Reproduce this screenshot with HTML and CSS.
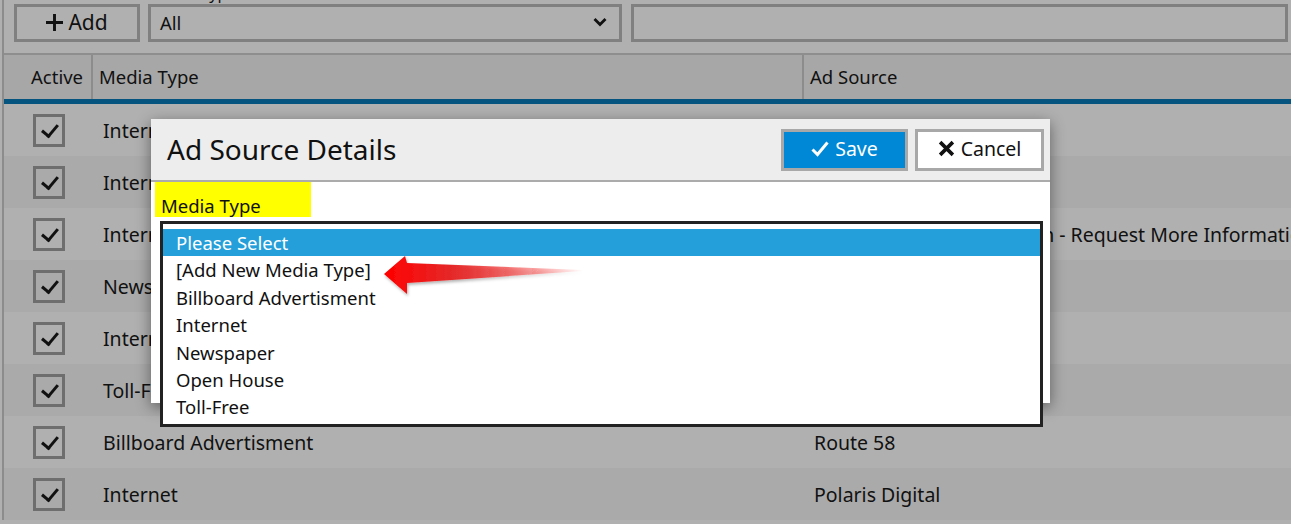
FILE: index.html
```html
<!DOCTYPE html>
<html lang="en">
	<head>
		<meta charset="utf-8"/>
		<title>Ad Sources</title>
		<link rel="stylesheet" href="styles.css">
	</head>
	<body>
		<div class="page">
			<div class="toolbar">
				<div class="field">
					<span class="field-label">&nbsp;</span>
					<button class="btn-add"><svg class="ico-plus" viewBox="0 0 14 14"><path d="M7 0V14M0 7H14"/></svg>Add</button>
				</div>
				<div class="field field-type">
					<span class="field-label">Media Type</span>
					<div class="select">All<svg class="ico-chevron" viewBox="0 0 14 10"><path d="M1.5 2L7 7.5L12.5 2"/></svg></div>
				</div>
				<div class="field field-grow">
					<span class="field-label">Ad Source</span>
					<div class="input"></div>
				</div>
			</div>
			<div class="grid">
				<div class="grid-head">
					<div class="col-active">Active</div>
					<div class="col-type">Media Type</div>
					<div class="col-source">Ad Source</div>
				</div>
				<div class="grid-row">
					<div class="col-active"><span class="checkbox"></span></div>
					<div class="col-type">Internet</div>
					<div class="col-source">Zillow</div>
				</div>
				<div class="grid-row">
					<div class="col-active"><span class="checkbox"></span></div>
					<div class="col-type">Internet</div>
					<div class="col-source">Realtor.com</div>
				</div>
				<div class="grid-row">
					<div class="col-active"><span class="checkbox"></span></div>
					<div class="col-type">Internet</div>
					<div class="col-source">Internet Lead Registration - Request More Information</div>
				</div>
				<div class="grid-row">
					<div class="col-active"><span class="checkbox"></span></div>
					<div class="col-type">Newspaper</div>
					<div class="col-source">Daily Press</div>
				</div>
				<div class="grid-row">
					<div class="col-active"><span class="checkbox"></span></div>
					<div class="col-type">Internet</div>
					<div class="col-source">Trulia</div>
				</div>
				<div class="grid-row">
					<div class="col-active"><span class="checkbox"></span></div>
					<div class="col-type">Toll-Free</div>
					<div class="col-source">800 Number</div>
				</div>
				<div class="grid-row">
					<div class="col-active"><span class="checkbox"></span></div>
					<div class="col-type">Billboard Advertisment</div>
					<div class="col-source">Route 58</div>
				</div>
				<div class="grid-row">
					<div class="col-active"><span class="checkbox"></span></div>
					<div class="col-type">Internet</div>
					<div class="col-source">Polaris Digital</div>
				</div>
			</div>
		</div>

		<div class="modal">
			<div class="modal-head">
				<h2>Ad Source Details</h2>
				<button class="btn-save"><svg class="ico-check" viewBox="0 0 18 16"><path d="M1.5 8.5L6.5 13.5L16.5 1.5"/></svg>Save</button>
				<button class="btn-cancel"><svg class="ico-x" viewBox="0 0 16 16"><path d="M2 2L14 14M14 2L2 14"/></svg>Cancel</button>
			</div>
			<div class="modal-body">
				<span class="label-hl">Media Type</span>
			</div>
		</div>

		<div class="listbox">
			<div class="option selected">Please Select</div>
			<div class="option">[Add New Media Type]</div>
			<div class="option">Billboard Advertisment</div>
			<div class="option">Internet</div>
			<div class="option">Newspaper</div>
			<div class="option">Open House</div>
			<div class="option">Toll-Free</div>
			<svg class="arrow" viewBox="0 0 215 50" width="215" height="50">
				<defs>
					<linearGradient id="arrowFill" x1="0" y1="0" x2="1" y2="0">
						<stop offset="0" stop-color="#ff0000"/>
						<stop offset="0.35" stop-color="#e42a2a"/>
						<stop offset="1" stop-color="#ff0000" stop-opacity="0"/>
					</linearGradient>
					<filter id="arrowShadow" x="-10%" y="-30%" width="120%" height="160%">
						<feDropShadow dx="1" dy="2" stdDeviation="1.5" flood-color="#000" flood-opacity="0.3"/>
					</filter>
				</defs>
				<path d="M6 24L27 6L29 13L205 20L205 21L29 33L29 44Z" fill="url(#arrowFill)" filter="url(#arrowShadow)"/>
			</svg>
		</div>
	</body>
</html>
```

FILE: styles.css
```css
html, body {
	margin: 0;
	height: 100%;
	overflow: hidden;
}
body {
	background-color: #b0b0b0;
	font-family: "Noto Sans", "Open Sans", sans-serif;
	color: #111;
	position: relative;
}
.page {
	margin-left: 2px;
	border-left: 2px solid #8c8c8c;
	min-height: 100%;
}

/* toolbar */
.toolbar {
	display: flex;
	gap: 8px;
	padding: 0 3px 0 10px;
	margin-top: -18px;
	height: 73px;
	box-sizing: border-box;
	border-bottom: 2px solid #8e8e8e;
}
.field {
	display: flex;
	flex-direction: column;
}
.field-label {
	font-size: 16px;
	line-height: 22px;
	padding-left: 2px;
	white-space: nowrap;
}
.field-type {
	width: 474px;
}
.field-grow {
	flex: 1;
	margin-left: 1px;
}
.btn-add, .select, .input {
	height: 38px;
	box-sizing: border-box;
	border: 3px solid #808080;
	background: #b0b0b0;
}
.btn-add {
	width: 126px;
	font-family: inherit;
	font-size: 21px;
	color: #111;
	display: flex;
	align-items: center;
	justify-content: center;
	gap: 5px;
	padding: 0 0 3px 0;
}
.ico-plus {
	width: 17px;
	height: 17px;
	stroke: #111;
	stroke-width: 2.4;
	margin-top: 2px;
}
.select {
	display: flex;
	align-items: center;
	justify-content: space-between;
	padding: 0 12px 2px 9px;
	font-size: 18.5px;
}
.ico-chevron {
	width: 14px;
	height: 10px;
	fill: none;
	stroke: #111;
	stroke-width: 2.8;
}

/* grid */
.grid-head, .grid-row {
	display: flex;
	align-items: center;
	white-space: nowrap;
}
.grid-head {
	height: 44px;
	background-color: #a7a7a7;
	border-bottom: 5px solid #04547f;
	font-size: 18.5px;
}
.grid-head > div {
	height: 100%;
	display: flex;
	align-items: center;
	box-sizing: border-box;
	padding-bottom: 1px;
}
.grid-head .col-active {
	border-right: 2px solid #8c8c8c;
	padding-left: 27px;
}
.grid-head .col-type {
	padding-left: 6px;
	border-right: 2px solid #8c8c8c;
}
.grid-head .col-source {
	padding-left: 6px;
}
.col-active {
	width: 89px;
	flex: none;
}
.col-type {
	width: 711px;
	flex: none;
	overflow: hidden;
}
.col-source {
	flex: 1;
	overflow: hidden;
}
.grid-row {
	height: 52px;
	font-size: 19.5px;
	background-color: #b0b0b0;
}
.grid-row:nth-child(odd) {
	background-color: #aaaaaa;
}
.grid-row .col-active {
	display: flex;
	justify-content: center;
}
.grid-row .col-type {
	padding-left: 10px;
	box-sizing: border-box;
}
.grid-row .col-source {
	padding-left: 10px;
}
.checkbox {
	width: 32px;
	height: 33px;
	box-sizing: border-box;
	border: 3px solid #6e6e6e;
	position: relative;
}
.checkbox::after {
	content: "";
	position: absolute;
	left: 9px;
	top: 4px;
	width: 7px;
	height: 13px;
	border-right: 3px solid #111;
	border-bottom: 3px solid #111;
	transform: rotate(40deg);
}

/* modal */
.modal {
	position: absolute;
	left: 151px;
	top: 119px;
	width: 899px;
	height: 284px;
	background: #fff;
	box-shadow: 0 4px 14px rgba(0, 0, 0, 0.45);
}
.modal-head {
	height: 61px;
	background: #ededed;
	border-bottom: 2px solid #ababab;
	display: flex;
	align-items: center;
	gap: 7px;
	padding-right: 6px;
}
.modal-head h2 {
	margin: 0 auto 0 16px;
	font-size: 28px;
	font-weight: 400;
	color: #111;
	padding-bottom: 2px;
}
.btn-save, .btn-cancel {
	height: 42px;
	box-sizing: border-box;
	border: 3px solid #a8a8a8;
	font-family: inherit;
	font-size: 19.5px;
	display: flex;
	align-items: center;
	justify-content: center;
	gap: 6px;
	padding: 0 0 3px 0;
	margin-top: 1px;
}
.btn-save {
	width: 127px;
	background: #0088d6;
	color: #fff;
}
.btn-cancel {
	width: 129px;
	background: #fff;
	color: #111;
}
.ico-check {
	width: 18px;
	height: 16px;
	fill: none;
	stroke: #fff;
	stroke-width: 3;
}
.ico-x {
	width: 17px;
	height: 17px;
	stroke: #111;
	stroke-width: 3.4;
}
.modal-body {
	padding: 0 4px;
}
.label-hl {
	display: inline-block;
	background: #ffff00;
	width: 156px;
	height: 35px;
	box-sizing: border-box;
	padding: 13px 0 0 6px;
	font-size: 18.5px;
	line-height: 22px;
}

/* open dropdown list */
.listbox {
	position: absolute;
	left: 160px;
	top: 221px;
	width: 883px;
	height: 206px;
	box-sizing: border-box;
	border: 3px solid #222;
	background: #fff;
	padding: 5px 0 0 0;
	font-size: 18.5px;
}
.option {
	height: 27.4px;
	line-height: 28px;
	padding-left: 13px;
	white-space: nowrap;
}
.option.selected {
	background: #259fda;
	color: #fff;
}
.arrow {
	position: absolute;
	left: 215px;
	top: 26px;
}
```
